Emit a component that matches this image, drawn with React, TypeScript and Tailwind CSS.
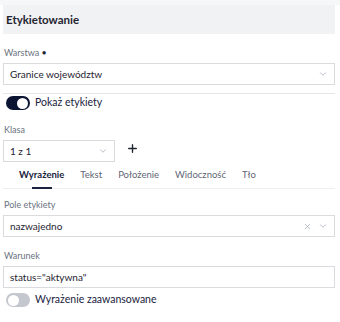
import { ChevronDown, X, Plus } from "lucide-react";

const font = { fontFamily: 'Lato, "Noto Sans", sans-serif' };

function Label({ children }: { children: React.ReactNode }) {
    return <div className="h-[14px] text-[9px] leading-[14px] text-[#6b7280]">{children}</div>;
}

function Toggle({ on }: { on: boolean }) {
    return (
        <div
            className={`w-[24px] h-[14px] rounded-full flex items-center px-[2px] ${
                on ? "bg-[#0b1533] justify-end" : "bg-[#c4c7cd] justify-start"
            }`}
        >
            <div className="w-[11px] h-[11px] rounded-full bg-white" />
        </div>
    );
}

export default function App() {
    const tabs = ["Wyrażenie", "Tekst", "Położenie", "Widoczność", "Tło"];

    return (
        <div className="w-[340px] h-[322px] bg-white text-[#1f2937] overflow-hidden" style={font}>
            <div className="h-[5px] bg-[#f6f7f9]" />
            <div className="pl-[3px] pr-[5px]">
                {/* Header */}
                <div className="h-[29px] bg-[#f1f2f4] flex items-center px-[3px]">
                    <span className="text-[11.5px] font-bold text-[#1f2430]">Etykietowanie</span>
                </div>

                {/* Warstwa */}
                <div className="mt-[12px] pl-[1px]">
                    <Label>
                        Warstwa <span className="text-[#1f2937]">•</span>
                    </Label>
                </div>
                <div className="mt-[3px] h-[22px] border border-[#d9dbde] flex items-center pl-[6px] pr-[6px]">
                    <span className="flex-1 text-[10px] text-[#1f2430]">Granice województw</span>
                    <ChevronDown className="w-[10px] h-[10px] text-[#8a93a3]" strokeWidth={1.5} />
                </div>
                <div className="mt-[8px] h-px bg-[#e6e7ea]" />

                {/* Pokaż etykiety */}
                <div className="mt-[2px] h-[14px] flex items-center gap-[5px] pl-[3px]">
                    <Toggle on />
                    <span className="text-[10.5px] text-[#1a2340]">Pokaż etykiety</span>
                </div>

                {/* Klasa */}
                <div className="mt-[13px] pl-[1px]">
                    <Label>Klasa</Label>
                </div>
                <div className="mt-[3px] flex items-center">
                    <div className="w-[112px] h-[22px] border border-[#d9dbde] flex items-center pl-[6px] pr-[6px]">
                        <span className="flex-1 text-[10px] text-[#1f2430]">1 z 1</span>
                        <ChevronDown className="w-[10px] h-[10px] text-[#8a93a3]" strokeWidth={1.5} />
                    </div>
                    <Plus className="ml-[11px] -mt-[6px] w-[13px] h-[13px] text-[#1f2430]" strokeWidth={2.5} />
                </div>

                {/* Tabs */}
                <div className="mt-[1px] flex border-b border-[#eceef0] pl-[13px] h-[26px]">
                    {tabs.map((t, i) => (
                        <div key={t} className="relative flex items-center justify-center px-[3px] mr-[10px]">
                            <span
                                className={`text-[9.5px] ${
                                    i === 0 ? "text-[#1a2340] font-bold" : "text-[#5f6675]"
                                }`}
                            >
                                {t}
                            </span>
                            {i === 0 && (
                                <div className="absolute bottom-[-1px] left-1/2 -translate-x-1/2 w-[20px] h-[2px] bg-[#1a2340]" />
                            )}
                        </div>
                    ))}
                </div>

                {/* Pole etykiety */}
                <div className="mt-[9px] pl-[1px]">
                    <Label>Pole etykiety</Label>
                </div>
                <div className="mt-[3px] h-[22px] border border-[#d9dbde] flex items-center pl-[6px] pr-[6px]">
                    <span className="flex-1 text-[10px] text-[#1f2430]">nazwajedno</span>
                    <X className="w-[9px] h-[9px] text-[#8a93a3] mr-[6px]" strokeWidth={1.5} />
                    <ChevronDown className="w-[10px] h-[10px] text-[#8a93a3]" strokeWidth={1.5} />
                </div>

                {/* Warunek */}
                <div className="mt-[12px] pl-[1px]">
                    <Label>Warunek</Label>
                </div>
                <div className="mt-[3px] h-[22px] border border-[#d9dbde] flex items-center pl-[6px] pr-[6px]">
                    <span className="text-[10px] text-[#1f2430]">status="aktywna"</span>
                </div>

                {/* Wyrażenie zaawansowane */}
                <div className="mt-[5px] h-[14px] flex items-center gap-[5px] pl-[3px]">
                    <Toggle on={false} />
                    <span className="text-[10.5px] text-[#1a2340]">Wyrażenie zaawansowane</span>
                </div>
            </div>
        </div>
    );
}
